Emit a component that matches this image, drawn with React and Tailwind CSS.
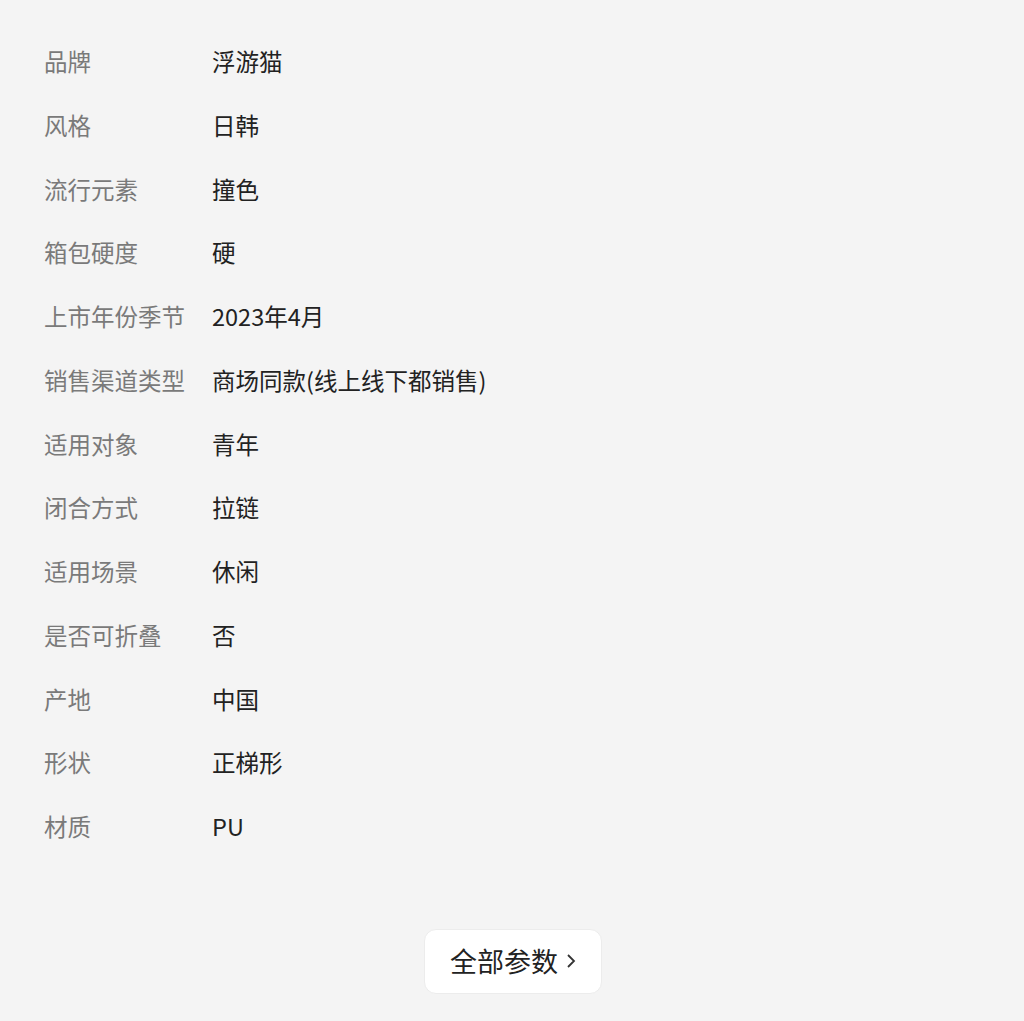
const rows = [
  ["品牌", "浮游猫"],
  ["风格", "日韩"],
  ["流行元素", "撞色"],
  ["箱包硬度", "硬"],
  ["上市年份季节", "2023年4月"],
  ["销售渠道类型", "商场同款(线上线下都销售)"],
  ["适用对象", "青年"],
  ["闭合方式", "拉链"],
  ["适用场景", "休闲"],
  ["是否可折叠", "否"],
  ["产地", "中国"],
  ["形状", "正梯形"],
  ["材质", "PU"],
];

export default function App() {
  return (
    <div
      className="min-h-[1021px] w-full bg-[#f4f4f4] pt-[30px] pl-[44px]"
      style={{ fontFamily: '"Noto Sans CJK SC", "Noto Sans", sans-serif' }}
    >
      <div className="flex flex-col">
        {rows.map(([k, v]) => (
          <div key={k} className="flex h-[63.75px] items-center text-[23.5px] leading-none">
            <div className="w-[168px] shrink-0 text-[#7a7a7a]">{k}</div>
            <div className="text-[#222]">{v}</div>
          </div>
        ))}
      </div>
      <div className="flex justify-center pt-[70px] pr-[42px]">
        <button className="flex h-[65px] w-[178px] items-center justify-center gap-2 rounded-xl border border-[#ececec] bg-white text-[27px] text-[#222]">
          全部参数
          <svg width="10" height="16" viewBox="0 0 10 16" fill="none" stroke="#333" strokeWidth="1.8">
            <path d="M2 2l6 6-6 6" />
          </svg>
        </button>
      </div>
    </div>
  );
}
